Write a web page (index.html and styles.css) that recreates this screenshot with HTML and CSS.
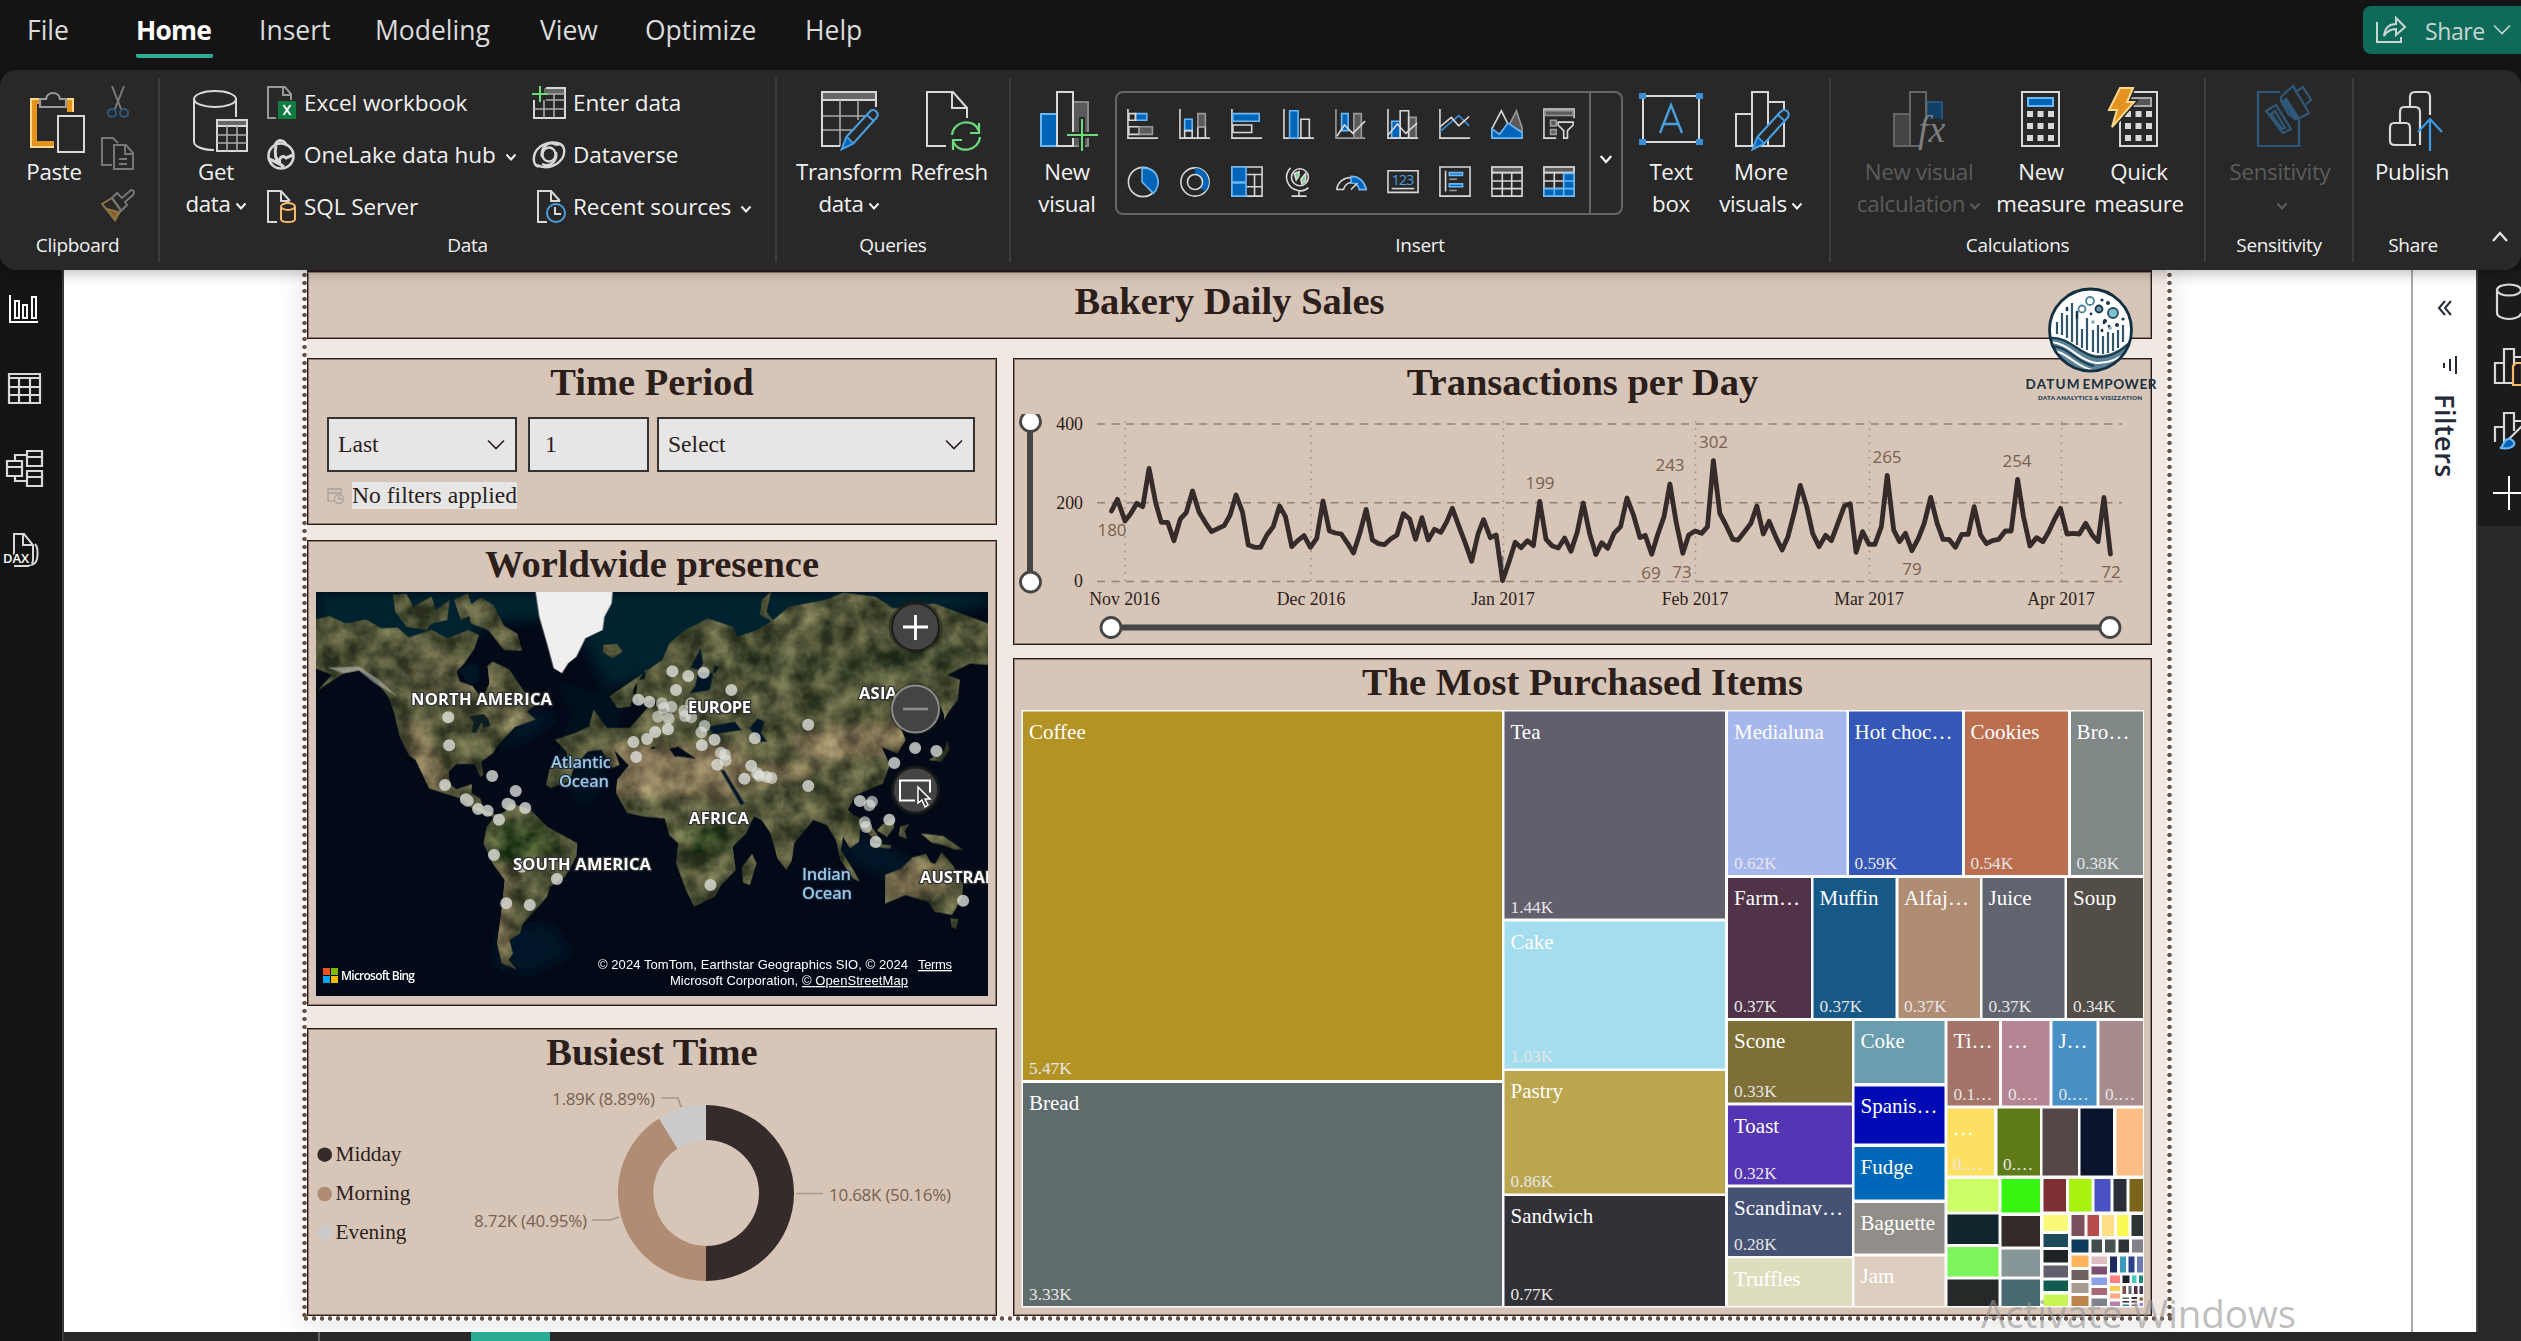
FILE: index.html
```html
<!DOCTYPE html>
<html lang="en">
<head>
<meta charset="utf-8">
<title>Bakery Daily Sales</title>
<link rel="stylesheet" href="styles.css">
</head>
<body>
<svg width="0" height="0" class="defs">
  <defs>
    <symbol id="chev" viewBox="0 0 12 12"><path d="M1.5 3.5 6 8.500l4.500-5" fill="none" stroke="currentColor" stroke-width="2"/></symbol>
    <symbol id="chev-thin" viewBox="0 0 20 12"><path d="M2 1.500 10 9.500l8-8" fill="none" stroke="currentColor" stroke-width="1.600"/></symbol>
    <symbol id="pencil" viewBox="0 0 44 46"><path d="M3 43 8 30 32 4c2-2.500 5-2.500 7-.5s2 4.500 0 7L15 37z" fill="#282828" stroke="#4a9fe0" stroke-width="2.200"/><path d="M3 43 8 30l7 7z" fill="#0064b8" stroke="#4a9fe0" stroke-width="1.800"/><path d="m29 7 8 7" stroke="#4a9fe0" stroke-width="2"/></symbol>
  </defs>
</svg>
<div class="app">
  <header class="menu">
    <nav class="tabs">
      <a class="t1">File</a><a class="t2 active">Home</a><a class="t3">Insert</a><a class="t4">Modeling</a><a class="t5">View</a><a class="t6">Optimize</a><a class="t7">Help</a>
    </nav>
    <div class="share">
      <svg width="34" height="32" viewBox="0 0 34 32" fill="none" stroke="#c9d6d2" stroke-width="2"><path d="M3 8v20h24v-5"/><path d="M10 22c1-8 5-12 12-12V4l9 9-9 8v-6c-5 0-9 2-12 7z"/></svg>
      <span>Share</span>
      <svg width="20" height="12"><use href="#chev-thin"/></svg>
    </div>
  </header>

  <section class="ribbon">
    <div class="group g-clip">
      <div class="row">
        <div class="big"><svg width="60" height="64" viewBox="0 0 60 64"><path d="M7 9h42v48H7z" fill="#e59320" stroke="#fbd98c" stroke-width="2"/><path d="M13 14h30v37H13z" fill="#282828"/><path d="M16 17v-8h6c1-8 13-8 14 0h6v8z" fill="#282828" stroke="#9a9a9a" stroke-width="2.200"/><path d="M30 22h30v42H30z" fill="#282828"/><path d="M34 26h26v36H34z" fill="#282828" stroke="#d8d8d8" stroke-width="2"/></svg><b>Paste</b></div>
        <div class="minis">
          <svg width="34" height="34" viewBox="0 0 34 34" fill="none" stroke="#7b7b7b" stroke-width="2"><path d="M11 1 20 24M23 1l-9 23"/><circle cx="11" cy="28" r="4" stroke="#33597a"/><circle cx="23" cy="28" r="4" stroke="#33597a"/></svg>
          <svg width="34" height="34" viewBox="0 0 34 34" fill="none" stroke="#777" stroke-width="2"><path d="M11 28H1V1h11l5 5"/><path d="M13 8h12l7 8v16H13zM24 8v9h8M18 22h8M18 27h8"/></svg>
          <svg width="34" height="34" viewBox="0 0 34 34" fill="none" stroke="#777" stroke-width="2"><path d="m1 15 10-6 9 12-6 10z" stroke="#8d7546"/><path d="m6 20 11 3-3 8z" fill="#8a5a20" stroke="#8d7546"/><path d="m11 9 5-5 5 5 9-8c3 0 4 2 2 5l-8 7 2 3-6 6z"/></svg>
        </div>
      </div>
      <p>Clipboard</p>
    </div>

    <div class="group g-data">
      <div class="row">
        <div class="big"><svg width="60" height="64" viewBox="0 0 60 64" fill="none" stroke="#d8d8d8" stroke-width="2"><ellipse cx="29" cy="9" rx="21" ry="8"/><path d="M8 9v43c0 4 8 8 20 8M50 9v18"/><path d="M31 30h30v31H31z" fill="#282828"/><path d="M31 30h30v6H31z" fill="#666"/><path d="M41 36v25M51 36v25M31 45h30M31 53h30" stroke="#aaa" stroke-width="1.600"/></svg><b>Get<br>data<svg width="12" height="12"><use href="#chev"/></svg></b></div>
        <ul class="list l1">
          <li><svg width="31" height="34" viewBox="0 0 31 34" fill="none" stroke="#9a9a9a" stroke-width="2"><path d="M10 32H2V1h17l6 7v6M17 1v8h8"/><path d="M12 15h18v18H12z" fill="#107c41" stroke="none"/><path d="m17.500 19 7 10m0-10-7 10" stroke="#fff"/></svg><span>Excel workbook</span></li>
          <li><svg width="31" height="34" viewBox="0 0 31 34" fill="none" stroke="#d8d8d8" stroke-width="2.600"><circle cx="15" cy="18" r="12.500"/><path d="M9 7c3-6 9-6 12 1M10 8c-2 8 0 14 4 18M14 26c-2-7 3-9 6-6l7-3M3 21c5 2 10 4 15 8" stroke-width="3"/></svg><span>OneLake data hub</span><svg class="c" width="12" height="12"><use href="#chev"/></svg></li>
          <li><svg width="31" height="34" viewBox="0 0 31 34" fill="none" stroke="#d8d8d8" stroke-width="2"><path d="M11 32H2V1h13l9 10M15 1v10h8"/><path d="M15 17v12c0 4 14 4 14 0V17" fill="#282828" stroke="#fbb867"/><ellipse cx="22" cy="16.500" rx="7" ry="3.500" fill="#282828" stroke="#fbb867"/></svg><span>SQL Server</span></li>
        </ul>
        <ul class="list l2">
          <li><svg width="34" height="34" viewBox="0 0 34 34" fill="none" stroke="#d8d8d8" stroke-width="2"><path d="M12 2h20v6H12z" fill="#666" stroke="none"/><path d="M2 14v18h31V2H14"/><path d="M12 14v18M22 8v24M2 23h31M14 14h19M14 8h19" stroke="#aaa" stroke-width="1.600"/><path d="M0 8h16M8 0v16" stroke="#6ddb7c"/></svg><span>Enter data</span></li>
          <li><svg width="34" height="34" viewBox="0 0 34 34" fill="none" stroke="#d8d8d8" stroke-width="2.400"><path d="M29 6C20 2 7 6 3 15c-3 8 0 15 6 13M5 27c9 5 21 1 26-8 3-8 0-15-7-12"/><ellipse cx="17" cy="16.500" rx="6.500" ry="7"/><path d="M24 7c-8-5-16 3-14 12M10 26c8 4 16-3 14-12"/></svg><span>Dataverse</span></li>
          <li><svg width="34" height="34" viewBox="0 0 34 34" fill="none" stroke="#d8d8d8" stroke-width="2"><path d="M15 32H6V1h13l9 10M19 1v10h9"/><circle cx="24" cy="23" r="9" fill="#282828" stroke="#4a9fe0"/><path d="M23 17v7h6"/></svg><span>Recent sources</span><svg class="c" width="12" height="12"><use href="#chev"/></svg></li>
        </ul>
      </div>
      <p>Data</p>
    </div>

    <div class="group g-query">
      <div class="row">
        <div class="big w108"><svg width="64" height="64" viewBox="0 0 64 64" fill="none" stroke="#d8d8d8" stroke-width="2"><path d="M5 2h54v8H5z" fill="#666"/><path d="M23 10v46M41 10v20M5 26h50M5 40h36" stroke="#aaa" stroke-width="1.600"/><path d="M59 17V2H5v54h18"/><use href="#pencil" x="22" y="18" width="42" height="44"/></svg><b>Transform<br>data<svg width="12" height="12"><use href="#chev"/></svg></b></div>
        <div class="big w92"><svg width="60" height="64" viewBox="0 0 60 64" fill="none" stroke="#d8d8d8" stroke-width="2"><path d="M27 56H8V2h26l14 16v10M33 2v16h15"/><g stroke="#6ddb7c" stroke-width="2.200"><path d="M33 45c1-14 22-18 27-4M60 33v10h-9M61 47c-1 14-22 18-27 4M34 60V50h9"/></g></svg><b>Refresh</b></div>
      </div>
      <p>Queries</p>
    </div>

    <div class="group g-insert">
      <div class="row">
        <div class="big"><svg width="60" height="64" viewBox="0 0 60 64" fill="none" stroke-width="2"><path d="M34 12h17v44H34z" fill="#5a5a5a" stroke="#888"/><path d="M4 24h16v32H4z" fill="#0064b8" stroke="#6cb8f5"/><path d="M20 2h16v54H20z" fill="#282828" stroke="#d8d8d8"/><path d="M45 27v34M29 45h31" stroke="#282828" stroke-width="6"/><path d="M45 29v32M30 45h31" stroke="#6ddb7c"/></svg><b>New<br>visual</b></div>
        <div class="gallery">
          <div class="cells">
            <svg viewBox="0 0 34 34"><path class="a" d="M1 1v31h32"/><path class="bl" d="M9 6h12v7H9z"/><path class="w" d="M2 6h7v7H2zM2 20h11v8H2z"/><path class="gr" d="M13 20h14v8H13z"/></svg>
            <svg viewBox="0 0 34 34"><path class="a" d="M1 1v31h32"/><path class="bl" d="M6 12h8v12H6z"/><path class="w" d="M6 24h8v8H6zM20 20h8v12h-8z"/><path class="gr" d="M20 6h8v14h-8z"/></svg>
            <svg viewBox="0 0 34 34"><path class="a" d="M1 1v31h32"/><path class="bl" d="M2 6h28v8H2z"/><path class="w" d="M2 18h20v8H2z"/></svg>
            <svg viewBox="0 0 34 34"><path class="a" d="M1 1v31h32"/><path class="bl" d="M7 3h9v29H7z"/><path class="w" d="M19 12h9v20h-9z"/></svg>
            <svg viewBox="0 0 34 34"><path class="a g" d="M1 1v31h31"/><path class="bl" d="M7 6h7v18H7z"/><path class="gr" d="M20 6h8v26h-8z"/><path class="w n" d="m2 30 8-12 9 9L32 14"/></svg>
            <svg viewBox="0 0 34 34"><path class="bl" d="M5 14h9v18H5z"/><path class="gr" d="M23 10h8v22h-8z"/><path class="w" d="M14 3h9v29h-9z"/><path class="a" d="M1 1v31h32"/><path class="w n" d="m1 29 10-12 9 10 12-11"/></svg>
            <svg viewBox="0 0 34 34"><path class="a" d="M1 1v31h32"/><path class="b n" d="m1 25 20-17 11 11"/><path class="w n" d="m1 20 12-10 8 9L32 9"/></svg>
            <svg viewBox="0 0 34 34"><path class="gr" d="m27 3 6 18v11H20V17z"/><path class="w n" d="M1 31V22L11 3l10 20"/><path class="bl" d="M1 32V22l8 6 9-12 15 10v6z"/></svg>
            <svg viewBox="0 0 34 34"><path class="w" d="M14 32H1V1h32v10"/><path class="gr" d="M2 3h30v5H2zM8 13h6v6H8zM8 23h6v5H8z"/><path class="w" d="M16 15h16v3l-6 6v8h-4v-8l-6-6z"/></svg>
            <svg viewBox="0 0 34 34"><circle class="w" cx="17" cy="17" r="15.500"/><path class="bl" d="M16 2c20 0 20 20 12 27L16 17z"/></svg>
            <svg viewBox="0 0 34 34"><circle class="w" cx="17" cy="17" r="15"/><path d="M17 5.500a11.500 11.500 0 0 1 8 19.500" fill="none" stroke="#0064b8" stroke-width="6.500"/><circle class="w" cx="17" cy="17" r="8"/></svg>
            <svg viewBox="0 0 34 34"><path class="w" d="M1 1h32v31H1zM17 9h16M25 9v23M17 22h8M25 22h8"/><path class="bl" d="M1 1h15v16H1zM1 18h15v14H1z"/></svg>
            <svg viewBox="0 0 34 34"><path class="w n" d="M8 2c-8 8-4 22 8 24 4 1 8 0 11-3M17 26v6M9 32h16"/><circle class="w" cx="18" cy="12" r="9"/><path fill="#6ddb7c" d="m12 8 5-2v4l-3 5zM19 14l5-6v8l-4 3z"/></svg>
            <svg viewBox="0 0 34 34"><path class="w" d="M2 25C3 8 31 8 33 25h-7C24 15 12 15 9 25z"/><path class="bl" d="M17 11c8 0 14 5 16 14h-7c-1-4-4-7-9-7z"/><path class="w n" d="m17 25 7-7"/></svg>
            <svg viewBox="0 0 34 34"><path class="w" d="M1 5h32v23H1z"/><path class="w n" d="M5 24h24"/><text x="5" y="20" font-size="15" fill="#4a9fe0" textLength="24" font-family="Open Sans">123</text></svg>
            <svg viewBox="0 0 34 34"><path class="w" d="M1 1h32v31H1zM7 5v22"/><path class="bl" d="M11 7h14v3H11zM11 19h14v3H11z"/><path class="w g" d="M11 14h8M11 26h8"/></svg>
            <svg viewBox="0 0 34 34"><path class="gr" d="M1 1h32v6H1z"/><path class="w" d="M1 1h32v31H1zM1 7h32M12 7v25M22 7v25M1 16h32M1 24h32"/></svg>
            <svg viewBox="0 0 34 34"><path class="gr" d="M1 1h32v6H1z"/><path class="w" d="M1 1h32v31H1zM1 7h32M12 7v25M22 7v25M1 16h32M1 24h32"/><path class="bl" d="M22 8h11v8H22zM22 16h11v8H22zM1 24h11v8H1zM12 24h10v8H12zM22 24h11v8H22z"/></svg>
          </div>
          <div class="more"><svg width="14" height="14"><use href="#chev"/></svg></div>
        </div>
        <div class="big w96"><svg width="64" height="64" viewBox="0 0 64 64"><path d="M4 6h56v46H4z" fill="none" stroke="#d8d8d8" stroke-width="2"/><path d="M0 3h7v6H0zM57 3h7v6h-7zM0 49h7v6H0zM57 49h7v6h-7z" fill="#3a8fd8"/><path d="m21 43 11-28 11 28M25 34h14" fill="none" stroke="#4a9fe0" stroke-width="2.400"/></svg><b>Text<br>box</b></div>
        <div class="big w84"><svg width="60" height="64" viewBox="0 0 60 64" fill="none" stroke="#d8d8d8" stroke-width="2"><path d="M5 24h16v32H5zM37 12h16v44H37z"/><path d="M21 2h16v54H21z" fill="#282828"/><use href="#pencil" x="18" y="18" width="44" height="44"/></svg><b>More<br>visuals<svg width="12" height="12"><use href="#chev"/></svg></b></div>
      </div>
      <p>Insert</p>
    </div>

    <div class="group g-calc">
      <div class="row">
        <div class="big off w146"><svg width="60" height="64" viewBox="0 0 60 64" fill="none" stroke="#666" stroke-width="2"><path d="M5 24h16v32H5z" fill="#444"/><path d="M38 12h15v18H38z" fill="#0f4068" stroke="#2a5378"/><path d="M21 2h16v54H21z" fill="#282828"/><circle cx="46" cy="46" r="18" fill="#282828" stroke="none"/><text x="29" y="52" font-family="Liberation Serif" font-style="italic" font-size="38" fill="#7d7d7d" stroke="none">fx</text></svg><b>New visual<br>calculation<svg width="12" height="12"><use href="#chev"/></svg></b></div>
        <div class="big w98"><svg width="60" height="64" viewBox="0 0 60 64"><path d="M11 2h37v54H11z" fill="none" stroke="#d8d8d8" stroke-width="2"/><path d="M17 8h25v8H17z" fill="#0064b8" stroke="#6cb8f5" stroke-width="2"/><path d="M16 24h27M16 36h27M16 48h27" stroke="#d8d8d8" stroke-width="6" stroke-dasharray="6 4.500"/></svg><b>New<br>measure</b></div>
        <div class="big w98"><svg width="60" height="64" viewBox="0 0 60 64"><path d="M11 2h37v54H11z" fill="none" stroke="#d8d8d8" stroke-width="2"/><path d="M17 8h25v8H17z" fill="#555" stroke="#aaa" stroke-width="2"/><path d="M16 24h27M16 36h27M16 48h27" stroke="#d8d8d8" stroke-width="6" stroke-dasharray="6 4.500"/><path d="M11-2h13l-6 14h7L3 37l5-17H0z" fill="#e59320" stroke="#282828" stroke-width="5"/><path d="M11-2h13l-6 14h7L3 37l5-17H0z" fill="#e59320" stroke="#fbd98c" stroke-width="2"/></svg><b>Quick<br>measure</b></div>
      </div>
      <p>Calculations</p>
    </div>

    <div class="group g-sens">
      <div class="row"><div class="big off w148"><svg width="60" height="64" viewBox="0 0 60 64" fill="none" stroke="#2f587b" stroke-width="2.200"><path d="M30 2H8v54h41V30"/><path d="m16 21 10-6 15 24-8 4zM21 24l4-3 10 17-3 1z"/><path d="m31 11 8 14 9 4 11-6-16-27-12 11z" fill="#282828"/><path d="m34 9 13 20" stroke-width="6"/><path d="m45 2 8-5 8 13-7 6"/></svg><b>Sensitivity<br><svg width="12" height="12"><use href="#chev"/></svg></b></div></div>
      <p>Sensitivity</p>
    </div>
    <div class="group g-share">
      <div class="row"><div class="big"><svg width="60" height="64" viewBox="0 0 60 64" fill="none" stroke="#d8d8d8" stroke-width="2.200"><path d="M34 55H13c-3 0-5-1-5-4V38c0-3 1-5 4-5h12c3 0 4 2 4 5v17M18 32V22c0-3 1-5 4-5h11c3 0 5 2 5 5v33M28 17V7c0-3 2-5 5-5h11c3 0 4 2 4 5v18"/><path d="M48 61V30M36 42l12-13 12 13" stroke="#3a9be8"/></svg><b>Publish</b></div>
      <svg class="collapse" width="18" height="14" viewBox="0 0 18 14"><path d="m2 11 7-8 7 8" fill="none" stroke="#e0e0e0" stroke-width="2.400"/></svg></div>
      <p>Share</p>
    </div>
  </section>

  <main class="work">
    <aside class="views">
      <svg width="44" height="44" viewBox="0 0 44 44" fill="none" stroke="#fff" stroke-width="2"><path d="M10 7v27h28"/><path d="M15 13h4v17h-4zM23 17h4v13h-4zM32 9h4v21h-4z"/></svg>
      <svg width="44" height="44" viewBox="0 0 44 44" fill="none" stroke="#d8d8d8" stroke-width="2.200"><path d="M9 6h31v29H9zM9 10h31M19 10v25M30 10v25M9 19h31M9 27h31"/></svg>
      <svg width="44" height="44" viewBox="0 0 44 44" fill="none" stroke="#d8d8d8" stroke-width="2.200"><path d="M7 13h15v15H7zM7 19h15M27 3h15v15H27zM27 9h15M27 23h15v15H27zM27 29h15M15 13V7h12M15 28v5h12"/></svg>
      <svg width="44" height="44" viewBox="0 0 44 44" fill="none" stroke="#d8d8d8" stroke-width="2"><path d="M14 27V6h10l9 11v15c0 3-2 5-5 6H14M23 6v11h10M35 16c3 3 3 9 2 15-1 4-3 6-7 6"/><text x="3" y="35" font-family="Open Sans" font-weight="600" font-size="13" fill="#fff" stroke="#141414" stroke-width="3" paint-order="stroke">DAX</text></svg>
    </aside>

    <div class="canvas">
      <div class="report">
        <div class="panel head"><h1>Bakery Daily Sales</h1></div>
        <div class="cols">
          <div class="col left">
            <div class="panel period">
              <h2>Time Period</h2>
              <div class="inputs">
                <div class="in i1"><span>Last</span><svg width="20" height="12"><use href="#chev-thin"/></svg></div>
                <div class="in i2"><span>1</span></div>
                <div class="in i3"><span>Select</span><svg width="20" height="12"><use href="#chev-thin"/></svg></div>
              </div>
              <div class="nofilter"><svg width="20" height="18" viewBox="0 0 20 18" fill="none" stroke="#aaa29c" stroke-width="1.300"><path d="M9 14H2V2h13v5M2 6h13M5 1v2M12 1v2"/><circle cx="13" cy="12" r="4.500"/><path d="M13 9v3h3"/></svg><span>No filters applied</span></div>
            </div>

            <div class="panel world">
              <h2>Worldwide presence</h2>
              <div class="map">
                <svg width="672" height="404" viewBox="316 592 672 404">
                  <defs>
                    <filter id="terrain" x="0" y="0" width="1" height="1" color-interpolation-filters="sRGB">
                      <feTurbulence type="fractalNoise" baseFrequency=".02 .015" numOctaves="5" seed="8"/>
                      <feColorMatrix values="1.500 0 0 0 -.38  1.350 0 0 0 -.32  1 0 0 0 -.26  0 0 0 0 .42"/>
                      <feComposite in2="SourceGraphic" operator="in" result="n"/>
                      <feMerge><feMergeNode in="SourceGraphic"/><feMergeNode in="n"/></feMerge>
                      <feGaussianBlur stdDeviation="1"/>
                    </filter>
                    <filter id="soft"><feGaussianBlur stdDeviation="16"/></filter>
                    <filter id="edge"><feGaussianBlur stdDeviation="1.500"/></filter>
                    <clipPath id="lc"><use href="#l1"/><use href="#l2"/><use href="#l3"/><use href="#l4"/></clipPath>
                  </defs>
                  <svg x="316" y="592" width="672" height="404" viewBox="35 36 1484 1212" preserveAspectRatio="none">
                    <path fill="#020a18" d="M35 36h1484v1212H35z"/>
                    <g filter="url(#soft)" fill="#04202f">
                      <path d="M35 36h1484v40l-400 90-200 40-240 120-80-210-180 10-100 120-284-60z"/>
                      <path d="M490 380l80 30-60 60-70 50zM440 1050l110-20 50 90-90 60-80-20zM1180 740l120 60 70 60-30 50-120-60z" opacity=".7"/>
                      <path d="M560 300 600 400 560 560 620 700 660 640 690 480 720 360z" opacity=".35"/>
                    </g>
                    <g filter="url(#terrain)">
                      <g fill="#475034">
                        <path id="l1" d="M35 118 65 108 100 130 145 118 180 145 215 142 240 172 290 150 325 175 372 150 395 165 385 205 362 250 345 275 352 305 380 318 402 358 418 310 414 258 425 245 462 268 492 330 522 372 500 395 520 418 475 440 440 490 425 520 400 545 405 585 398 590 385 552 345 552 328 575 330 610 345 628 380 612 378 640 398 655 405 690 435 705 452 696 462 668 508 688 545 740 612 790 610 830 585 890 552 920 545 950 520 990 492 1030 485 1060 462 1080 470 1120 460 1140 478 1168 445 1150 435 1090 445 990 452 900 425 850 405 790 412 740 428 712 405 700 380 685 355 655 320 640 285 625 255 540 240 525 220 470 208 400 195 350 165 300 130 270 95 280 40 330 70 285 35 265z"/>
                        <path id="l2" d="M205 45 235 42 250 80 290 50 300 90 330 60 325 120 290 130 280 150 235 140 210 95zM340 60l30-20 15 60-30 20zM370 80l30-28 28 25 22 60 30 25 10 50-40-2-35-60-38-20zM670 195 700 192 712 215 690 235 668 215zM745 300l25-5-5 25 15 38-30 12-8-25zM728 345l14-5-3 25-16 2z"/>
                        <path id="l3" d="M800 240 815 190 850 150 900 115 955 140 965 170 1010 150 1045 120 1080 80 1160 60 1200 38 1270 50 1310 85 1400 70 1519 130V255l-40-5-50 35 28 15-5 60-28 50-20-60-60 10-25 60 18 60-18 40-35-20 18 55-15 55-60 35-18 45 30 35-5 60-20 20-15-35-5 40 30 65 12 30-15-10-28-55-10-60-20-45-30-15-42 70-5 50-12 30-20-35-15-75-20-40-30-20-58-8-20-15-30-30 35 40 35 10 12 25-25 45-55 30-10-5-10-35-35-80 25-50-5-30-60-10-5-38 50-20 42 8-40-38-28 10-30-10-18 40 8 25-18 20-28-35-28-40 12 45-15 10-25-55-30 5-30 45-10 45-42 20-10-10 10-60 40-5-5-35-25-35 45-20 30-20 10-50 30 55 50 0 42-65 25-10-40-25 10-80-28 60-8 55-28 5-18-35zM1020 60l20-25-10 60 15 30-30-20z"/>
                        <path id="l4" d="M748 512 812 500 835 545 875 550 905 545 928 560 955 650 975 690 1010 685 985 760 955 800 962 870 930 915 915 950 870 980 852 930 830 850 835 790 815 765 805 715 760 710 722 698 698 640 700 600 730 550zM998 822l10 28-15 65-15-8-3-45zM1142 680l10 15-5 20-12-10zM1225 705l40 40 20 40-15-5-40-50zM1285 735l28-22-2 30-15 28-22-20zM1260 788l45 8-2 10-45-8zM1325 740l20-8-10 20 5 25-18-10zM1370 760l50 8 45 42-20-2-30-15-20-5zM1292 885l35-18 25-35 30-10 10 25 10 5 15-35 25 40 22 58-2 35-22 55-38-10-15-30-50-20-45 25zM1436 1015l18 2-6 30-10-8zM1388 540l35-30 6-28 5 28-18 34zM1422 420l5-120 10 80z"/>
                      </g>
                      <g clip-path="url(#lc)">
                        <g filter="url(#soft)">
                          <path d="M690 490h270l60 130 120-40-60-120 250-40 10 90-130 30-200 20-60 120-50-30-220-10z" fill="#9d8767"/>
                          <path d="M215 400 270 430 320 580 350 640 260 620zM430 870l40-10-10 290-40-50zM1290 860l120-20 30 100-150 20z" fill="#847257"/>
                          <path d="M420 730l110 0 40 70-60 60-80-20zM850 740l90 0 0 70-80 20z" fill="#1f3f16"/>
                          <path d="M240 180l180 60 100 160-60 60-120-60-100-60z" fill="#55573c"/>
                          <path d="M900 200 1200 260 1400 160 1500 240 1300 300 1000 300z" fill="#35452a"/>
                        </g>
                      </g>
                    </g>
                    <g filter="url(#edge)">
                      <path d="M520 36 690 36 688 70 672 110 668 150 630 175 610 230 592 250 578 280 560 265 545 190 528 110z" fill="#f1efee"/>
                      <path d="M60 262 130 260 175 300 215 350 165 310 130 272 95 280z" fill="#b9bab2" opacity=".6"/>
                      <path d="M375 410l30-8 10 15 5 20-15 5-5-15-12 30-8 0 3-30z" fill="#0b1a20"/>
                      <path d="M872 320 880 270 862 262 884 205 890 250 880 275 915 280 925 262 915 255 905 330 860 340zM900 440l60-15 15 25-60 12zM992 445l18-30 15 10-8 35 15 25-15 0zM928 570l8 0 45 100-8 5zM350 270l30-22 15 10 0 45-20 12z" fill="#031827"/>
                    </g>
                    <path fill="none" stroke="#dfe2dc" stroke-opacity=".78" stroke-linecap="round" stroke-width="12" vector-effect="non-scaling-stroke" d="M327 412h.1M329 496h.1M320 615h.1M424 588h.1M476 633h.1M366 658h.1M370 662h.1M393 687h.1M414 692h.1M458 671h.1M463 674h.1M497 684h.1M439 719h.1M428 825h.1M489 860h.1M567 897h.1M455 970h.1M507 975h.1M822 274h.1M857 288h.1M891 278h.1M830 330h.1M952 330h.1M747 359h.1M771 365h.1M1004 475h.1M1122 434h.1M1122 618h.1M1358 504h.1M1405 513h.1M1312 549h.1M1236 663h.1M1301 719h.1M1271 786h.1M1464 962h.1M906 915h.1M736 486h.1M742 531h.1M766 477h.1M784 456h.1M812 448h.1M915 479h.1M981 596h.1M996 557h.1M921 554h.1M887 496h.1"/>
                    <g fill="#e4e6e2" fill-opacity=".62"><ellipse cx="799" cy="370" rx="13" ry="18"/><ellipse cx="803" cy="385" rx="13" ry="18"/><ellipse cx="790" cy="410" rx="13" ry="18"/><ellipse cx="820" cy="380" rx="13" ry="18"/><ellipse cx="814" cy="416" rx="13" ry="18"/><ellipse cx="863" cy="370" rx="13" ry="18"/><ellipse cx="848" cy="392" rx="13" ry="18"/><ellipse cx="850" cy="408" rx="13" ry="18"/><ellipse cx="864" cy="412" rx="13" ry="18"/><ellipse cx="893" cy="438" rx="13" ry="18"/><ellipse cx="886" cy="457" rx="13" ry="18"/><ellipse cx="929" cy="518" rx="13" ry="18"/><ellipse cx="938" cy="524" rx="13" ry="18"/><ellipse cx="940" cy="541" rx="13" ry="18"/><ellipse cx="1009" cy="580" rx="13" ry="18"/><ellipse cx="1014" cy="587" rx="13" ry="18"/><ellipse cx="1030" cy="590" rx="13" ry="18"/><ellipse cx="1041" cy="594" rx="13" ry="18"/><ellipse cx="1263" cy="665" rx="13" ry="18"/><ellipse cx="1257" cy="676" rx="13" ry="18"/><ellipse cx="1247" cy="727" rx="13" ry="18"/><ellipse cx="1250" cy="741" rx="13" ry="18"/></g>
                  </svg>
                  <g class="cont">
                    <text x="411" y="705" textLength="141">NORTH AMERICA</text>
                    <text x="688" y="713" textLength="63">EUROPE</text>
                    <text x="859" y="699" textLength="38">ASIA</text>
                    <text x="689" y="824" textLength="60">AFRICA</text>
                    <text x="513" y="870" textLength="138">SOUTH AMERICA</text>
                    <text x="920" y="883">AUSTRALIA</text>
                  </g>
                  <g class="ocean">
                    <text x="551" y="768" textLength="60">Atlantic</text><text x="559" y="787" textLength="50">Ocean</text>
                    <text x="802" y="880" textLength="49">Indian</text><text x="802" y="899" textLength="50">Ocean</text>
                  </g>
                  <g stroke-width="2"><circle cx="915.500" cy="627" r="27" fill="#1b2010" fill-opacity=".5"/><circle cx="915.500" cy="709" r="26" fill="#1b2010" fill-opacity=".4"/><circle cx="915.500" cy="790" r="25" fill="#1b2010" fill-opacity=".5"/>
                  <circle cx="915.500" cy="627" r="23.500" fill="#444" stroke="#1d1d1d"/><circle cx="915.500" cy="709" r="23.500" fill="#444" stroke="#8a8a8a"/><circle cx="915.500" cy="790" r="22.500" fill="#444" stroke="#1d1d1d"/></g>
                  <path d="M903 627h25M915.500 615v25" stroke="#fff" stroke-width="2.800"/><path d="M903 709h25" stroke="#8c8c8c" stroke-width="2.600"/>
                  <path d="M915 800.500h-15v-20h30v12" fill="none" stroke="#fff" stroke-width="2"/><path d="M918 787v16l4-3 3 7 3-2-3-6h5z" fill="#333" stroke="#fff" stroke-width="1.500"/>
                  <path fill="#f25022" d="M323 968h7v7h-7z"/><path fill="#7fba00" d="M331 968h7v7h-7z"/><path fill="#00a4ef" d="M323 976h7v7h-7z"/><path fill="#ffb900" d="M331 976h7v7h-7z"/>
                  <text x="341" y="980" class="bing" textLength="74">Microsoft Bing</text>
                  <g class="copy"><text x="598" y="969" textLength="310">© 2024 TomTom, Earthstar Geographics SIO, © 2024</text><text x="918" y="969" textLength="34" text-decoration="underline">Terms</text><text x="670" y="985" textLength="128">Microsoft Corporation,</text><text x="802" y="985" textLength="106" text-decoration="underline">© OpenStreetMap</text></g>
                </svg>
              </div>
            </div>

            <div class="panel busy">
              <h2>Busiest Time</h2>
              <svg class="chart" width="686" height="230" viewBox="309 1084 686 230">
                <path fill="#352b2b" d="M706 1105a88 88 0 0 1 0 176v-35a53 53 0 0 0 0-106z"/>
                <path fill="#b08c72" d="M706 1281A88 88 0 0 1 659 1118.500L677.500 1148.500A53 53 0 0 0 706 1246z"/>
                <path fill="#cbcbcb" d="M659 1118.500A88 88 0 0 1 706 1105v35a53 53 0 0 0-28.500 8.500z"/>
                <path d="M661 1098h17l3 9M796 1193.500h27M592 1220h18l9-3" fill="none" stroke="#a8968a" stroke-width="1.700"/>
                <g class="lab"><text x="552" y="1105" textLength="103">1.89K (8.89%)</text><text x="829" y="1201" textLength="122">10.68K (50.16%)</text><text x="474" y="1227" textLength="113">8.72K (40.95%)</text></g>
                <circle cx="324.700" cy="1154.700" r="7.300" fill="#352b2b"/><circle cx="324.700" cy="1194" r="7.300" fill="#b08c72"/><circle cx="324.700" cy="1232.700" r="7.300" fill="#cbcbcb"/>
                <g class="leg"><text x="335.500" y="1161" textLength="66">Midday</text><text x="335.500" y="1200" textLength="75">Morning</text><text x="335.500" y="1239" textLength="71">Evening</text></g>
              </svg>
            </div>
          </div>

          <div class="col right">
            <div class="panel trans">
              <h2>Transactions per Day</h2>
              <svg class="chart" width="1135" height="230" viewBox="1015 414 1135 230">
                <g stroke="#927f77" stroke-width="1.600" stroke-dasharray="8 6.600"><path d="M1097 424H2122M1097 502.800H2122M1097 581.500H2122"/></g>
                <g stroke="#a08d84" stroke-width="1.600" stroke-dasharray="1.600 5.600"><path d="M1125 421V583M1311 421V583M1503.500 421V583M1695.500 421V583M1869.500 421V583M2061.500 421V583"/></g>
                <g class="lab"><text x="1112" y="536">180</text><text x="1502" y="568">1</text><text x="1540" y="489">199</text><text x="1670" y="471">243</text><text x="1713.500" y="448">302</text><text x="1651" y="579">69</text><text x="1682" y="578">73</text><text x="1887" y="463">265</text><text x="1912" y="575">79</text><text x="2017" y="467">254</text><text x="2111" y="578">72</text></g>
                <g fill="none" stroke="#352b2b" stroke-width="4.800" stroke-linejoin="round" stroke-linecap="round">
                  <g transform="translate(1000 340) scale(.3954 .33333)"><polyline vector-effect="non-scaling-stroke" points="282,513 297,478 316,543 330,522 346,490 361,500 377,385 394,490 408,547 424,547 440,602 456,537 471,518 487,453 503,515 519,547 535,575 552,565 567,557 582,525 597,465 613,515 628,615 644,622 659,622 675,585 691,560 707,498 722,530 738,620 753,602 769,587 785,622 801,595 817,483 833,573 848,579 863,582 879,610 894,639 910,580 926,508 942,600 957,611 972,614 988,597 1004,585 1020,521 1036,537 1051,598 1067,533 1083,600 1099,568 1115,577 1130,545 1144,505 1160,557 1177,610 1193,664 1209,582 1223,539 1240,593 1255,585 1271,722 1287,667 1303,607 1318,623 1334,602 1349,617 1365,484 1381,598 1397,618 1412,624 1428,594 1444,634 1460,576 1475,489 1491,580 1507,643"/></g>
                  <g transform="translate(1600 260) scale(.58737 .33333)"><polyline vector-effect="non-scaling-stroke" points="-7,883 3,848 13,865 24,820 35,800 46,714 57,765 68,833 77,826 88,883 98,825 109,770 119,672 130,790 141,880 151,825 162,813 173,820 183,800 193,602 204,760 215,797 226,838 235,840 246,815 257,790 267,738 278,822 288,784 299,830 310,870 320,830 331,755 341,676 352,740 362,820 373,860 384,826 394,842 405,790 416,738 426,731 436,877 447,815 458,853 468,853 479,800 489,646 500,810 510,845 520,820 531,872 542,835 552,790 563,712 574,790 584,838 594,838 605,862 616,823 627,823 637,740 648,825 658,851 668,842 679,838 690,813 700,813 711,658 721,770 732,858 743,833 754,845 764,815 774,777 784,745 795,822 806,820 816,822 827,790 838,825 848,845 858,712 869,882"/></g>
                </g>
                <g class="ax end"><text x="1083" y="430">400</text><text x="1083" y="508.500">200</text><text x="1083" y="587">0</text></g>
                <g class="ax"><text x="1124.500" y="604.500">Nov 2016</text><text x="1311" y="604.500">Dec 2016</text><text x="1503" y="604.500">Jan 2017</text><text x="1695" y="604.500">Feb 2017</text><text x="1869" y="604.500">Mar 2017</text><text x="2061" y="604.500">Apr 2017</text></g>
                <path d="M1030 421.500V582M1111 627.500H2110" stroke="#464646" stroke-width="6"/>
                <g fill="#fff" stroke="#464646" stroke-width="2.800"><circle cx="1030.500" cy="421.500" r="10"/><circle cx="1030.500" cy="582" r="10"/><circle cx="1111" cy="627.500" r="10"/><circle cx="2110" cy="627.500" r="10"/></g>
              </svg>
            </div>

            <div class="panel items">
              <h2>The Most Purchased Items</h2>
              <svg class="chart" width="1135" height="600" viewBox="1015 710 1135 600">
                <path fill="#fbfbfb" d="M1021.500 710H2144V1307.500H1021.500z"/>
                <path fill="#b39324" d="M1023 711.500H1502V1080H1023z"/><path fill="#606b6c" d="M1023 1083H1502V1306H1023z"/>
                <path fill="#625f6d" d="M1504.500 711.500H1725V918.500H1504.500z"/><path fill="#a4ddee" d="M1504.500 921.500H1725V1068.500H1504.500z"/><path fill="#bba64f" d="M1504.500 1071H1725V1193.500H1504.500z"/><path fill="#313137" d="M1504.500 1196H1725V1306H1504.500z"/>
                <path fill="#a6b7ed" d="M1728 711.500H1846.500V875H1728z"/><path fill="#3557b8" d="M1849 711.500H1962V875H1849z"/><path fill="#bb6f4f" d="M1965 711.500H2068V875H1965z"/><path fill="#808888" d="M2071 711.500H2143V875H2071z"/>
                <path fill="#513349" d="M1728 878H1811V1018H1728z"/><path fill="#165987" d="M1813.500 878H1895.500V1018H1813.500z"/><path fill="#b08c72" d="M1898.500 878H1980V1018H1898.500z"/><path fill="#5f646e" d="M1982.500 878H2064.500V1018H1982.500z"/><path fill="#524d46" d="M2067 878H2143V1018H2067z"/>
                <path fill="#7d6f36" d="M1728 1021H1852V1102.500H1728z"/><path fill="#5435b3" d="M1728 1105.500H1852V1184.500H1728z"/><path fill="#465274" d="M1728 1187.500H1852V1256H1728z"/><path fill="#dedebf" d="M1728 1258.500H1852V1306H1728z"/>
                <path fill="#6a9dae" d="M1854.500 1021H1944.500V1083H1854.500z"/><path fill="#000bb6" d="M1854.500 1086.500H1944.500V1143.500H1854.500z"/><path fill="#0068b9" d="M1854.500 1147H1944.500V1199.500H1854.500z"/><path fill="#918e89" d="M1854.500 1203H1944.500V1253.500H1854.500z"/><path fill="#decebf" d="M1854.500 1256.500H1944.500V1306H1854.500z"/>
                <path fill="#a57468" d="M1947.500 1021H1999V1105.500H1947.500z"/><path fill="#b68594" d="M2002 1021H2049.500V1105.500H2002z"/><path fill="#4990c6" d="M2052.500 1021H2096.500V1105.500H2052.500z"/><path fill="#a68c8d" d="M2099.500 1021H2143V1105.500H2099.500z"/>
                <path fill="#fde062" d="M1947.500 1108.500H1994V1175.500H1947.500z"/><path fill="#5f7b18" d="M1997.500 1108.500H2040V1175.500H1997.500z"/><path fill="#544747" d="M2042.500 1108.500H2078V1175.500H2042.500z"/><path fill="#0c132c" d="M2080.500 1108.500H2113V1175.500H2080.500z"/><path fill="#fbbe84" d="M2116.500 1108.500H2143V1175.500H2116.500z"/>
                <path fill="#ccff66" d="M1947.500 1179H1998.500V1211.500H1947.500z"/><path fill="#36f510" d="M2001.500 1179H2040V1212.500H2001.500z"/><path fill="#10252c" d="M1947.500 1214.500H1998.500V1244H1947.500z"/><path fill="#352b2b" d="M2001.500 1216H2040V1246.500H2001.500z"/><path fill="#7cf55b" d="M1947.500 1247H1998.500V1276.500H1947.500z"/><path fill="#869699" d="M2001.500 1249.500H2040V1276.500H2001.500z"/><path fill="#252929" d="M1947.500 1279.500H1998.500V1306H1947.500z"/><path fill="#486972" d="M2001.500 1279.500H2040V1306H2001.500z"/>
                <path fill="#7c3033" d="M2043.500 1179H2066V1211.500H2043.500z"/><path fill="#a8f20f" d="M2069 1179H2091.500V1211.500H2069z"/><path fill="#4a51c4" d="M2094.500 1179H2110.500V1211.500H2094.500z"/><path fill="#2a2e39" d="M2113.500 1179H2126.500V1211.500H2113.500z"/><path fill="#7a651b" d="M2129.500 1179H2143V1211.500H2129.500z"/>
                <path fill="#fafa78" d="M2043.500 1215H2068V1231H2043.500z"/><path fill="#1c4b5c" d="M2043.500 1234H2068V1247H2043.500z"/><path fill="#1c2425" d="M2043.500 1250H2068V1262.500H2043.500z"/><path fill="#625f6d" d="M2043.500 1265.500H2068V1277.500H2043.500z"/><path fill="#105c51" d="M2043.500 1280.500H2068V1291H2043.500z"/><path fill="#c8f655" d="M2043.500 1294.500H2068V1306H2043.500z"/>
                <path fill="#7b505c" d="M2071.500 1215H2084.500V1236H2071.500z"/><path fill="#b94a4c" d="M2087.500 1215H2099V1236H2087.500z"/><path fill="#fde086" d="M2102 1215H2114V1236H2102z"/><path fill="#fafa55" d="M2117 1215H2128.500V1236H2117z"/><path fill="#2b3535" d="M2131.500 1215H2143V1236H2131.500z"/>
                <path fill="#103b5c" d="M2071.500 1239.500H2088.500V1252.500H2071.500z"/><path fill="#424a4b" d="M2091.500 1239.500H2102V1252.500H2091.500z"/><path fill="#485253" d="M2105 1239.500H2115.500V1252.500H2105z"/><path fill="#2c3435" d="M2118.500 1239.500H2129V1252.500H2118.500z"/><path fill="#84818d" d="M2132 1239.500H2143V1252.500H2132z"/>
                <path fill="#ffb25b" d="M2071.500 1255.500H2088.500V1267H2071.500z"/><path fill="#6f6061" d="M2071.500 1270H2088.500V1280H2071.500z"/><path fill="#a69b8f" d="M2071.500 1283H2088.500V1293H2071.500z"/><path fill="#bc8449" d="M2071.500 1296H2088.500V1306H2071.500z"/>
                <path fill="#dfbdc1" d="M2091.500 1256.500H2107V1264H2091.500z"/><path fill="#7b4e72" d="M2091.500 1266.500H2107V1274.500H2091.500z"/><path fill="#8aa0ed" d="M2091.500 1277.500H2107V1285H2091.500z"/><path fill="#a86679" d="M2091.500 1288H2107V1295H2091.500z"/><path fill="#7e828b" d="M2091.500 1298.500H2107V1306H2091.500z"/>
                <path fill="#1c2b60" d="M2110 1256.500H2117V1272.500H2110z"/><path fill="#3a9cba" d="M2120 1256.500H2126V1272.500H2120z"/><path fill="#2a4088" d="M2128.500 1256.500H2134.500V1272.500H2128.500z"/><path fill="#6a7bb0" d="M2137 1256.500H2143V1272.500H2137z"/>
                <path fill="#ff8080" d="M2110 1275.500H2120V1283H2110z"/><path fill="#f5d050" d="M2110 1286H2120V1291H2110z"/><path fill="#ffa985" d="M2110 1293.500H2120V1298.500H2110z"/><path fill="#b682ac" d="M2110 1301.500H2120V1306H2110z"/>
                <path fill="#1e222b" d="M2122.500 1275.500H2129.500V1283H2122.500z"/><path fill="#45cbbd" d="M2132 1275.500H2136.500V1283H2132z"/><path fill="#20887a" d="M2139 1275.500H2143V1283H2139z"/>
                <path fill="#7c5040" d="M2122.500 1286H2126V1294H2122.500z"/><path fill="#5f6670" d="M2128.500 1286H2131.500V1294H2128.500z"/><path fill="#503040" d="M2134 1286H2137.500V1294H2134z"/><path fill="#403a55" d="M2139.500 1286H2143V1294H2139.500z"/>
                <path fill="#566a6c" d="M2122.500 1297.500H2129V1299H2122.500z"/><path fill="#3c2d2c" d="M2122.500 1301H2129V1302.500H2122.500zM2131.500 1297H2137V1299H2131.500zM2131.500 1301H2137V1302.500H2131.500z"/><path fill="#2f7f8a" d="M2122.500 1304.500H2129V1306H2122.500z"/><path fill="#7a6a62" d="M2131.500 1304.500H2137V1306H2131.500z"/><path fill="#8a5b3d" d="M2139.500 1297.500H2143V1300.500H2139.500z"/><path fill="#9a83e0" d="M2139.500 1303H2143V1306H2139.500z"/>
                <g class="nm">
                  <text x="1029" y="739">Coffee</text><text x="1029" y="1110">Bread</text><text x="1510.500" y="739">Tea</text><text x="1510.500" y="949">Cake</text><text x="1510.500" y="1098">Pastry</text><text x="1510.500" y="1223">Sandwich</text>
                  <text x="1734" y="739">Medialuna</text><text x="1854.500" y="739" textLength="98">Hot choc…</text><text x="1970.500" y="739">Cookies</text><text x="2076.500" y="739" textLength="53">Bro…</text>
                  <text x="1734" y="905" textLength="66">Farm…</text><text x="1819.500" y="905">Muffin</text><text x="1904" y="905" textLength="65">Alfaj…</text><text x="1988.500" y="905">Juice</text><text x="2073" y="905">Soup</text>
                  <text x="1734" y="1048">Scone</text><text x="1734" y="1133">Toast</text><text x="1734" y="1215" textLength="109">Scandinav…</text><text x="1734" y="1286">Truffles</text>
                  <text x="1860.500" y="1048">Coke</text><text x="1860.500" y="1113" textLength="77">Spanis…</text><text x="1860.500" y="1174">Fudge</text><text x="1860.500" y="1230">Baguette</text><text x="1860.500" y="1283">Jam</text>
                  <text x="1953.500" y="1048" textLength="39">Ti…</text><text x="2007" y="1048">…</text><text x="2058.500" y="1048" textLength="29">J…</text><text x="1953" y="1135">…</text>
                </g>
                <g class="vl">
                  <text x="1029" y="1074">5.47K</text><text x="1029" y="1300">3.33K</text><text x="1510.500" y="913">1.44K</text><text x="1510.500" y="1062">1.03K</text><text x="1510.500" y="1187">0.86K</text><text x="1510.500" y="1300">0.77K</text>
                  <text x="1734" y="869">0.62K</text><text x="1854.500" y="869">0.59K</text><text x="1970.500" y="869">0.54K</text><text x="2076.500" y="869">0.38K</text>
                  <text x="1734" y="1012">0.37K</text><text x="1819.500" y="1012">0.37K</text><text x="1904" y="1012">0.37K</text><text x="1988.500" y="1012">0.37K</text><text x="2073" y="1012">0.34K</text>
                  <text x="1734" y="1097">0.33K</text><text x="1734" y="1179">0.32K</text><text x="1734" y="1250">0.28K</text>
                  <text x="1953.500" y="1100">0.1…</text><text x="2008" y="1100">0.…</text><text x="2058.500" y="1100">0.…</text><text x="2105" y="1100">0.…</text><text x="1953" y="1170">0.…</text><text x="2003" y="1170">0.…</text>
                </g>
              </svg>
            </div>
          </div>
        </div>
        <svg class="logo" width="140" height="124" viewBox="2020 282 140 124">
          <clipPath id="disc"><circle cx="2090.500" cy="330" r="40.500"/></clipPath>
          <circle cx="2090.500" cy="330" r="41.500" fill="#fff"/>
          <g clip-path="url(#disc)">
            <path d="M2048 337c22-2 30 16 48 18 14 1 26-6 36-16v36h-84z" fill="#5d8399"/>
            <path d="M2048 342c22 0 28 18 48 21 14 1 26-6 36-14M2048 350c18 0 26 16 44 20 14 2 26-2 38-12M2050 358c14 2 20 12 34 16" fill="none" stroke="#fff" stroke-width="2"/>
            <path d="M2048 338c22-2 30 16 48 19 14 1 26-6 36-17M2050 346c18 0 26 16 44 20" fill="none" stroke="#1d3d50" stroke-width="2.200"/>
          </g>
          <path d="M2057 322v12M2062 313v22M2067 315v23M2072 303v39M2077 318v27M2082 329v19M2087 318v32M2093 330v22M2098 325v28M2103 336v18M2108 332v21M2113 333v18M2118 330v18M2123 325v17" stroke="#31566b" stroke-width="2.200"/>
          <path d="M2067 308v2M2077 312v6M2102 330v1M2098 308v1M2104 322v1M2109 326v1" stroke="#17354a" stroke-width="2.600" stroke-linecap="round"/>
          <g fill="#fff" stroke="#4b839e" stroke-width="1.800"><circle cx="2090" cy="301" r="4"/><circle cx="2082" cy="309" r="3.500"/><circle cx="2099" cy="309" r="3.500" fill="#7795a5" stroke="#17354a"/><circle cx="2113" cy="313" r="5" fill="#7cc0d6" stroke="#244d60"/></g>
          <g fill="#17354a"><circle cx="2102" cy="300" r="1.600"/><circle cx="2108" cy="303" r="2"/><circle cx="2091" cy="314" r="1.400"/><circle cx="2105" cy="321" r="2"/><circle cx="2117" cy="325" r="2"/><circle cx="2123" cy="319" r="1.600"/><circle cx="2093" cy="322" r="1.800" fill="#7aa7bb"/><circle cx="2110" cy="328" r="1.800" fill="#7aa7bb"/></g>
          <circle cx="2090.500" cy="330" r="41" fill="none" stroke="#12303f" stroke-width="2.800"/>
          <text x="2025.500" y="389" textLength="54" font-family="Lato" font-weight="700" font-size="13.500" fill="#16303f">DATUM</text>
          <text x="2082.500" y="389" textLength="74" font-family="Lato" font-weight="700" font-size="13.500" fill="#16303f">EMPOWER</text>
          <text x="2038" y="400" textLength="104" font-family="Lato" font-weight="800" font-size="6.200" fill="#27475a">DATA ANALYTICS &amp; VISIZZATION</text>
        </svg>
      </div>
      <div class="pages"><i class="p1"></i><i class="p2"></i></div>
      <span class="wm">Activate Windows</span>
    </div>

    <aside class="filters">
      <svg width="20" height="20" viewBox="0 0 20 20" fill="none" stroke="#252a3a" stroke-width="2"><path d="m10 3-6 7 6 7M16 3l-6 7 6 7"/></svg>
      <svg width="22" height="22" viewBox="0 0 22 22" stroke="#252a3a" stroke-width="2"><path d="M18 2v18M12 5v12M6 9v5"/></svg>
      <strong>Filters</strong>
    </aside>
    <aside class="panes">
      <svg width="28" height="40" viewBox="2493 282 28 40" fill="none" stroke="#d8d8d8" stroke-width="2.200"><ellipse cx="2509" cy="290" rx="12" ry="5.500"/><path d="M2497 290v23c0 3 5 6 12 6s12-3 12-6"/></svg>
      <svg width="28" height="40" viewBox="2493 346 28 40" fill="none" stroke="#d8d8d8" stroke-width="2.200"><path d="M2495 363h9v20h-9zM2504 349h10v34h-10zM2514 357h8"/><path d="M2513 366v19h9v-22h-6z" fill="#1b1b1b" stroke="#fbb867"/></svg>
      <svg width="28" height="40" viewBox="2493 410 28 40" fill="none" stroke="#d8d8d8" stroke-width="2.200"><path d="M2495 442v-15h9v15M2504 440v-27h10v18M2514 421h8M2508 440l14-14"/><path d="M2500 448c4-1 3-10 10-9 8 3 5 11-10 9z" fill="#0064b8" stroke="#6cb8f5"/></svg>
      <svg width="28" height="40" viewBox="2493 474 28 40" stroke="#fff" stroke-width="2"><path d="M2492 493h30M2509 476v34"/></svg>
    </aside>
  </main>
</div>
</body>
</html>
```
FILE: styles.css
```css
* { box-sizing: border-box; }
body { margin: 0; background: #141414; font-family: "Open Sans", "Noto Sans", sans-serif; color: #f2f2f2; overflow: hidden; }
.defs { position: absolute; }
.app { width: 2521px; height: 1341px; display: flex; flex-direction: column; overflow: hidden; }
h1, h2, p, ul { margin: 0; padding: 0; }
ul { list-style: none; }

.menu { height: 70px; flex: none; display: flex; justify-content: space-between; padding-left: 27px; }
.tabs { display: flex; align-items: flex-start; }
.tabs a { height: 58px; line-height: 60px; font-size: 26.5px; letter-spacing: 0; color: #dcdcdc; white-space: nowrap; }
.t1 { width: 109px; }
.t2 { width: 77px; margin-right: 46px; }
.t3 { width: 116px; }
.t4 { width: 165px; }
.t5 { width: 105px; }
.t6 { width: 160px; }
.tabs .active { font-weight: 700; color: #fff; letter-spacing: -.8px; border-bottom: 4px solid #2aab93; border-radius: 2px; }
.share { width: 158px; height: 48px; margin-top: 6px; background: #0e6b5a; border-radius: 8px 0 0 8px; display: flex; align-items: center; padding-left: 11px; color: #c9d6d2; font-size: 23px; letter-spacing: -.4px; }
.share span { width: 67px; margin: 2px 0 0 17px; }

.ribbon { height: 200px; flex: none; background: #282828; border-radius: 16px; display: flex; position: relative; z-index: 2; box-shadow: 0 3px 14px rgba(0,0,0,.28); }
.group { position: relative; height: 184px; margin-top: 8px; border-right: 2px solid #3d3d3d; display: flex; flex-direction: column; flex: none; }
.group .row { display: flex; height: 156px; }
.group p { text-align: center; font-size: 19px; line-height: 22px; letter-spacing: -.3px; }
.g-clip { width: 160px; padding-left: 9px; }
.g-clip p { margin-left: -12px; }
.g-data { width: 617px; padding-left: 11px; }
.g-data p { margin-left: -11px; }
.g-query { width: 234px; padding-left: 18px; }
.g-query p { margin-left: -18px; }
.g-insert { width: 820px; padding-left: 11px; }
.g-insert p { margin-left: -11px; }
.g-calc { width: 375px; padding-left: 15px; }
.g-calc p { margin-left: -15px; }
.g-sens { width: 148px; }
.g-share { width: 167px; border: 0; padding-left: 13px; }
.g-share p { margin-left: -62px; }
.big { width: 90px; padding-top: 12px; display: flex; flex-direction: column; align-items: center; flex: none; }
.big b { font-weight: 400; font-size: 22.3px; line-height: 32px; letter-spacing: -.3px; text-align: center; white-space: nowrap; padding-top: 3px; }
.big b svg { margin-left: 4px; }
.big > svg { height: 64px; overflow: visible; margin-bottom: -1px; }
.big.w108 { width: 108px; }
.big.w92 { width: 92px; }
.big.w96 { width: 96px; }
.big.w84 { width: 84px; }
.big.w98 { width: 98px; }
.big.w146 { width: 146px; }
.big.w148 { width: 148px; }
.big.off b { color: #5c5c5c; }
.minis { display: flex; flex-direction: column; gap: 18px; padding: 7px 0 0 2px; }
.list { margin-top: -1px; }
.list li { height: 52px; display: flex; align-items: center; font-size: 22.5px; letter-spacing: -.05px; white-space: nowrap; }
.list span { margin: -1px 0 0 7px; line-height: 30px; }
.l1 { width: 271px; padding-left: 5px; }
.list .c { margin: 4px 0 0 9px; }
.gallery { width: 508px; height: 124px; margin: 13px 0 0 3px; border: 2px solid #666; border-radius: 8px; display: flex; flex: none; }
.cells { width: 472px; display: grid; grid-template-columns: repeat(9, 52px); grid-auto-rows: 58px; padding-top: 2px; place-items: center; }
.cells svg { width: 32px; height: 32px; fill: none; stroke: #d8d8d8; stroke-width: 1.7; }
.cells text { stroke: none; }
.cells .bl { fill: #0064b8; stroke: #6cb8f5; }
.cells .b { stroke: #3a8fd8; }
.cells .gr { fill: #5a5a5a; stroke: #999; }
.cells .g { stroke: #999; }
.cells .w { fill: none; }
.more { flex: 1; border-left: 2px solid #666; display: grid; place-items: center; padding-top: 12px; }
.collapse { align-self: flex-end; margin: 0 0 -10px 34px; }

.work { flex: 1; display: flex; min-height: 0; background: linear-gradient(#141414, #141414) left / 64px 100% no-repeat #282828; }
.views { width: 64px; border-right: 2px solid #3a3a3a; padding-top: 18px; display: flex; flex-direction: column; gap: 36px; }
.canvas { width: 2347px; background: #fff; position: relative; padding-left: 238px; }
.report {
  --dot: radial-gradient(circle, #6f5545 1.9px, transparent 2.6px);
  width: 1870px; height: 1051px; padding: 0 5px 5px; position: relative;
  background: var(--dot) 0 1px / 5px 8px repeat-y, var(--dot) 100% 1px / 5px 8px repeat-y, var(--dot) 0 100% / 8px 5px repeat-x, linear-gradient(#f0e8e3, #f0e8e3) 5px 0 / 1860px 1046px no-repeat;
  box-shadow: 0 4px 24px rgba(0,0,0,.11);
}
.panel { background: #d7c5b8; border: 1px solid #2b1c1c; padding: 1px; box-shadow: inset 0 0 0 1px #907b72; overflow: hidden; }
h1, h2 { font: 700 38.5px/44px "Liberation Serif", serif; color: #2b1e1b; text-align: center; white-space: nowrap; }
.head { width: 1845px; height: 69px; border-top-width: 2px; }
.head h1 { padding-top: 6px; }
.cols { display: flex; gap: 16px; margin-top: 19px; }
.col { display: flex; flex-direction: column; }
.left { width: 690px; }
.right { width: 1139px; }
.period { height: 167px; margin-bottom: 15px; }
.world { height: 466px; margin-bottom: 22px; }
.busy { height: 288px; }
.trans { height: 287px; margin-bottom: 13px; }
.items { height: 658px; }
.col h2 { height: 54px; }
.world h2 { height: 50px; }
.items h2 { height: 50px; }
.chart { display: block; }
.inputs { display: flex; padding: 3px 0 0 18px; font: 23.6px "Liberation Serif", serif; color: #2b1e1b; }
.in { height: 55px; background: #e6e6e6; border: 2px solid #333; display: flex; align-items: center; justify-content: space-between; padding: 0 9px; }
.i1 { width: 190px; margin-right: 11px; }
.i2 { width: 121px; margin-right: 8px; padding-left: 15px; }
.i3 { width: 318px; }
.nofilter { display: flex; align-items: center; margin: 10px 0 0 17px; font: 23.6px/27px "Liberation Serif", serif; color: #2b1e1b; }
.nofilter span { background: #e6e6e6; margin-left: 6px; }
.map { width: 672px; height: 404px; margin-left: 7px; }
.map svg { display: block; }
.cont { font: 700 16.5px "Open Sans", sans-serif; fill: #fff; stroke: #333; stroke-width: 2.5px; paint-order: stroke; }
.ocean { font: 600 16.5px "Open Sans", sans-serif; fill: #9fc4e4; stroke: #12283c; stroke-width: 2px; paint-order: stroke; }
.bing { font: 600 12px "Open Sans", sans-serif; fill: #fff; }
.copy { font: 13px "Liberation Sans", sans-serif; fill: #fff; }
.lab { font: 17px "Open Sans", sans-serif; fill: #77614f; }
.trans .lab { text-anchor: middle; }
.leg { font: 21.3px "Liberation Serif", serif; fill: #2b1e1b; }
.ax { font: 17.8px "Liberation Serif", serif; fill: #2b1e1b; text-anchor: middle; }
.ax.end { text-anchor: end; }
.nm { font: 21px "Liberation Serif", serif; fill: #fff; }
.vl { font: 17.3px "Liberation Serif", serif; fill: #e6e6e6; }
.logo { position: absolute; left: 1718px; top: 12px; }
.pages { position: absolute; left: 0; right: 0; bottom: 0; height: 9px; background: #282828; display: flex; }
.p1 { width: 256px; border-right: 2px solid #666; }
.p2 { width: 79px; background: #2aab93; margin-left: 151px; }
.wm { position: absolute; left: 1917px; top: 1018px; font-size: 38.6px; line-height: 50px; letter-spacing: -.1px; color: rgba(150,150,150,.62); white-space: nowrap; }

.filters { width: 67px; height: 1062px; background: #fff; border-left: 2px solid #aaa; border-right: 2px solid #444; display: flex; flex-direction: column; align-items: center; padding-top: 28px; color: #252a3a; }
.filters svg + svg { margin: 36px 0 0 8px; }
.filters strong { writing-mode: vertical-rl; font-size: 27px; font-weight: 600; line-height: 30px; letter-spacing: .5px; margin-top: 18px; }
.panes { width: 43px; height: 256px; background: #1b1b1b; padding: 12px 0 0 15px; display: flex; flex-direction: column; gap: 24px; }
```
